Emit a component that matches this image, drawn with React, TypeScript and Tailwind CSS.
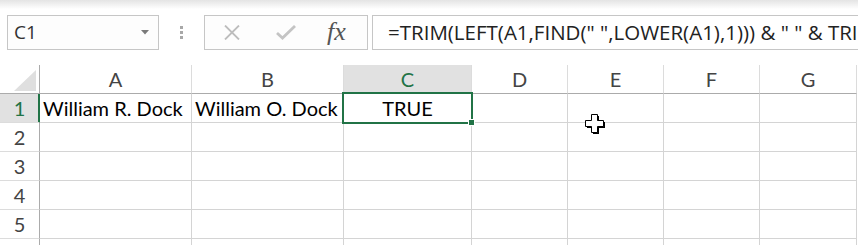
import React from 'react'

const cols = ['A', 'B', 'C', 'D', 'E', 'F', 'G']
const rows = [1, 2, 3, 4, 5, 6]

const cellFont = { fontFamily: 'Lato, "Open Sans", sans-serif' }
const uiFont = { fontFamily: '"Open Sans", "Noto Sans", sans-serif' }

function Toolbar() {
  return (
    <div className="h-[65px] bg-gradient-to-b from-[#e4e4e4] via-white via-[14%] to-white pt-[15px] flex items-start" style={uiFont}>
      {/* name box */}
      <div className="ml-[7px] w-[152px] h-[35px] border border-[#c6c6c6] bg-[#fdfdfd] flex items-center justify-between pl-[6px] pr-[9px]">
        <span className="text-[19px] text-[#333]">C1</span>
        <svg width="8" height="5" viewBox="0 0 8 5"><path d="M0 0h8L4 4.5z" fill="#7a7a7a" /></svg>
      </div>
      {/* dots */}
      <div className="w-[45px] h-[35px] flex flex-col items-center justify-center gap-[2px]">
        <span className="w-[3px] h-[3px] bg-[#a8a8a8]" />
        <span className="w-[3px] h-[3px] bg-[#a8a8a8]" />
        <span className="w-[3px] h-[3px] bg-[#a8a8a8]" />
      </div>
      {/* cancel / enter / fx */}
      <div className="w-[164px] h-[35px] border border-[#c6c6c6] bg-[#fdfdfd] flex items-center">
        <svg className="ml-[18px]" width="18" height="15" viewBox="0 0 18 15">
          <path d="M2 0.5L16 14.5M16 0.5L2 14.5" stroke="#bdbdbd" strokeWidth="1.8" />
        </svg>
        <svg className="ml-[35px]" width="20" height="15" viewBox="0 0 20 15">
          <path d="M1 8L6.5 13L19 1" stroke="#c4c4c4" strokeWidth="2.8" fill="none" />
        </svg>
        <span
          className="ml-[31px] text-[26px] italic text-[#555] leading-none -mt-[2px]"
          style={{ fontFamily: '"Liberation Serif", "DejaVu Serif", serif' }}
        >
          fx
        </span>
      </div>
      {/* formula input */}
      <div className="ml-[4px] flex-1 h-[35px] border border-r-0 border-[#c6c6c6] bg-white flex items-center pl-[15px] overflow-hidden whitespace-nowrap">
        <span className="text-[20.5px] text-[#222]">=TRIM(LEFT(A1,FIND(&quot; &quot;,LOWER(A1),1))) &amp; &quot; &quot; &amp; TRIM(MID(A1,FIND(&quot; &quot;,A1)+1,LEN(A1)))</span>
      </div>
    </div>
  )
}

function Sheet() {
  return (
    <div className="grid grid-cols-[40px_152px_152px_128px_96px_96px_96px_97px]" style={cellFont}>
      {/* header row */}
      <div className="h-[29px] border-r border-b border-r-[#ababab] border-b-[#ababab] bg-white flex items-end justify-end pr-[3px] pb-[2px]">
        <svg width="22" height="21" viewBox="0 0 22 21"><path d="M22 0V21H0z" fill="#dfdfdf" /></svg>
      </div>
      {cols.map(c => (
        <div
          key={c}
          className={
            'h-[29px] border-r border-b border-r-[#dcdcdc] border-b-[#ababab] flex items-center justify-center text-[20px] ' +
            (c === 'C' ? 'bg-[#e1e1e1] text-[#217346]' : 'bg-white text-[#444]')
          }
        >
          {c}
        </div>
      ))}

      {rows.map(r => (
        <React.Fragment key={r}>
          <div
            className={
              'h-[29px] border-r border-b border-b-[#dcdcdc] flex items-center justify-center text-[20px] ' +
              (r === 1
                ? 'bg-[#e1e1e1] text-[#217346] border-r-[#217346] shadow-[inset_-1px_0_0_#217346]'
                : 'bg-white text-[#444] border-r-[#ababab]')
            }
          >
            {r}
          </div>
          {cols.map(c => (
            <div
              key={c}
              className={
                'h-[29px] border-r border-b border-[#d4d4d4] bg-white text-[20px] text-black flex items-center whitespace-nowrap overflow-visible ' +
                (r === 1 && c === 'C' ? 'relative justify-center' : 'pl-[3px]')
              }
            >
              {r === 1 && c === 'A' && 'William R. Dock'}
              {r === 1 && c === 'B' && 'William O. Dock'}
              {r === 1 && c === 'C' && (
                <>
                  TRUE
                  <div className="absolute -left-[2px] -top-[2px] -right-[2px] -bottom-[2px] border-2 border-[#217346]" />
                  <div className="absolute -right-[4px] -bottom-[4px] w-[7px] h-[7px] bg-[#217346] border border-white" />
                </>
              )}
            </div>
          ))}
        </React.Fragment>
      ))}
    </div>
  )
}

export default function App() {
  return (
    <div className="relative w-[858px] h-[245px] overflow-hidden bg-white">
      <Toolbar />
      <Sheet />
      {/* mouse cursor */}
      <svg className="absolute left-[585px] top-[114px]" width="22" height="22" viewBox="0 0 22 22">
        <path d="M8 2H14V8H20V14H14V20H8V14H2V8H8Z" fill="black" />
        <path d="M6.5 0.5H12.5V6.5H18.5V12.5H12.5V18.5H6.5V12.5H0.5V6.5H6.5Z" fill="white" stroke="black" strokeWidth="1" />
      </svg>
    </div>
  )
}
